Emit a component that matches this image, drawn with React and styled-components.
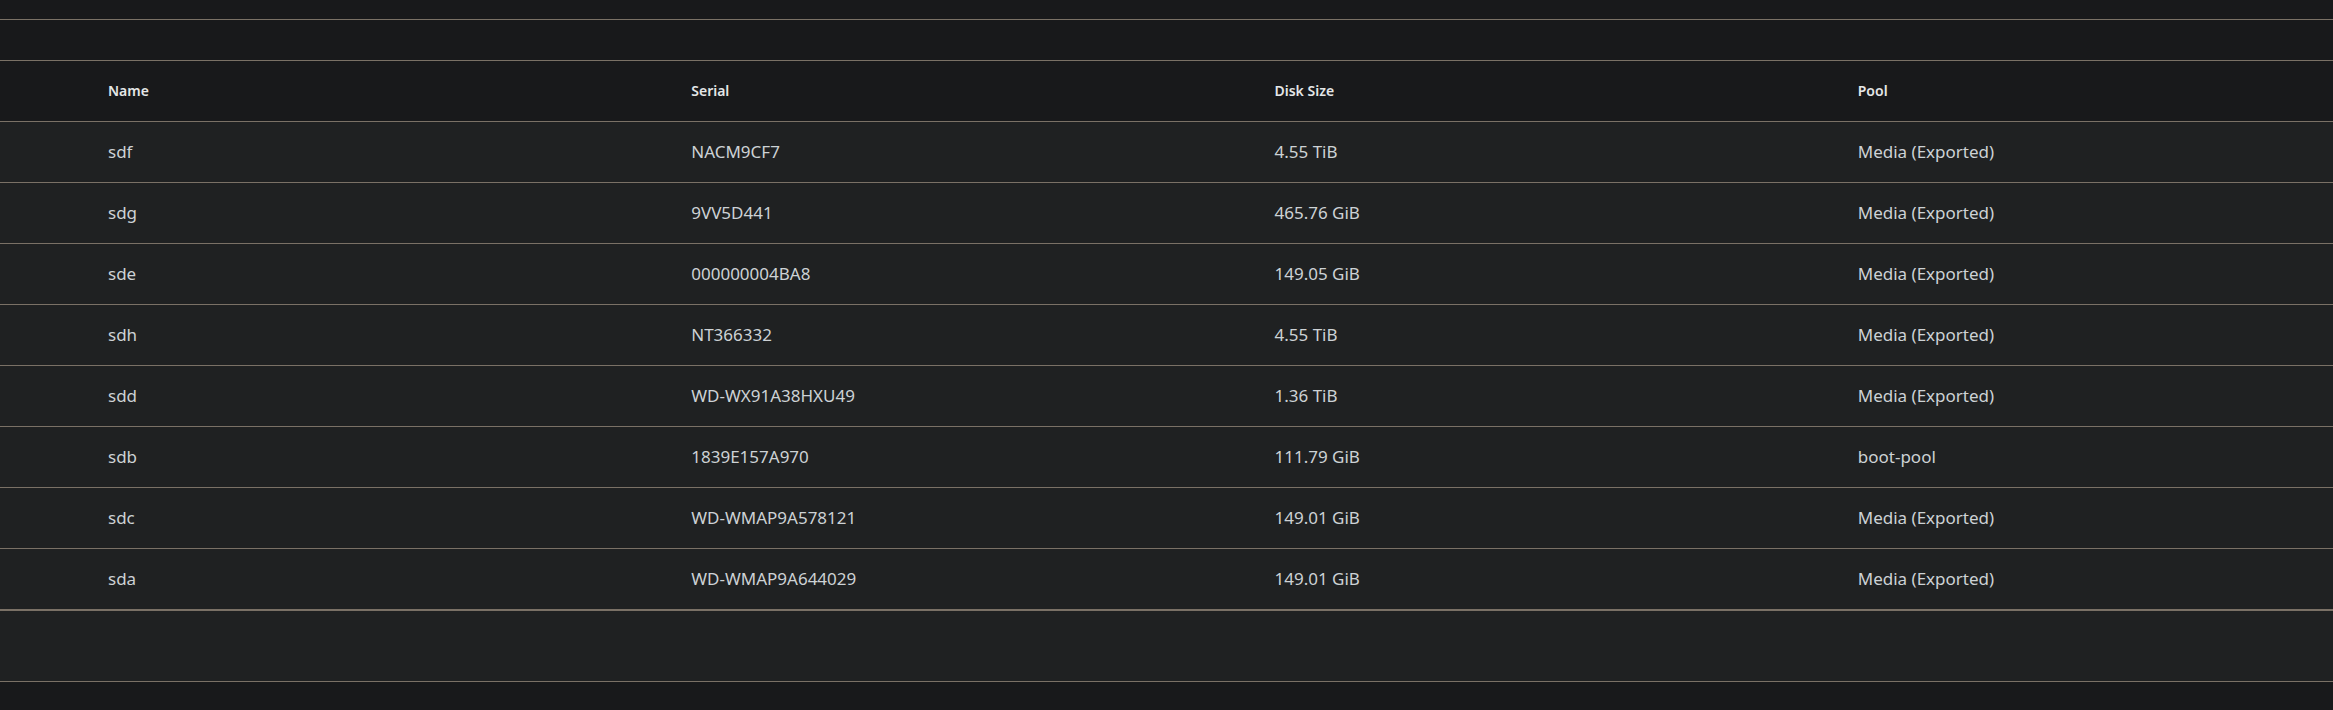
import React from "react";
import styled, { createGlobalStyle } from "styled-components";

const COLORS = {
  bgDark: "#18191b",
  bgRow: "#1f2122",
  line: "#7a7166",
  text: "#cdd2d5",
  head: "#e4e6e7",
};

const GlobalStyle = createGlobalStyle`
  *, *::before, *::after {
    box-sizing: border-box;
  }
  html, body {
    margin: 0;
    padding: 0;
    background: ${COLORS.bgDark};
  }
  body {
    font-family: "Noto Sans", "Open Sans", sans-serif;
    color: ${COLORS.text};
  }
`;

const Page = styled.div`
  width: 100%;
  min-height: 710px;
  background: ${COLORS.bgDark};
`;

const TopStrip = styled.div`
  height: 20px;
  border-bottom: 1px solid ${COLORS.line};
`;

const Toolbar = styled.div`
  height: 41px;
  border-bottom: 1px solid ${COLORS.line};
`;

const Table = styled.div`
  display: flex;
  flex-direction: column;
`;

const Row = styled.div`
  display: grid;
  grid-template-columns: repeat(4, 1fr);
  align-items: center;
  height: 61px;
  background: ${(p) => (p.$head ? "transparent" : COLORS.bgRow)};
  border-bottom: 1px solid ${COLORS.line};
`;

const HeadCell = styled.div`
  padding: 0 0 2px 108px;
  font-size: 14px;
  font-weight: 600;
  color: ${COLORS.head};
`;

const Cell = styled.div`
  padding: 0 0 2px 108px;
  font-size: 17px;
  color: ${COLORS.text};
  white-space: nowrap;
`;

const Footer = styled.div`
  height: 72px;
  background: ${COLORS.bgRow};
  border-top: 1px solid ${COLORS.line};
  border-bottom: 1px solid ${COLORS.line};
`;

const disks = [
  { name: "sdf", serial: "NACM9CF7", size: "4.55 TiB", pool: "Media (Exported)" },
  { name: "sdg", serial: "9VV5D441", size: "465.76 GiB", pool: "Media (Exported)" },
  { name: "sde", serial: "000000004BA8", size: "149.05 GiB", pool: "Media (Exported)" },
  { name: "sdh", serial: "NT366332", size: "4.55 TiB", pool: "Media (Exported)" },
  { name: "sdd", serial: "WD-WX91A38HXU49", size: "1.36 TiB", pool: "Media (Exported)" },
  { name: "sdb", serial: "1839E157A970", size: "111.79 GiB", pool: "boot-pool" },
  { name: "sdc", serial: "WD-WMAP9A578121", size: "149.01 GiB", pool: "Media (Exported)" },
  { name: "sda", serial: "WD-WMAP9A644029", size: "149.01 GiB", pool: "Media (Exported)" },
];

const App = () => {
  return (
    <Page>
      <GlobalStyle />
      <TopStrip />
      <Toolbar />
      <Table>
        <Row $head>
          <HeadCell>Name</HeadCell>
          <HeadCell>Serial</HeadCell>
          <HeadCell>Disk Size</HeadCell>
          <HeadCell>Pool</HeadCell>
        </Row>
        {disks.map((d) => (
          <Row key={d.name}>
            <Cell>{d.name}</Cell>
            <Cell>{d.serial}</Cell>
            <Cell>{d.size}</Cell>
            <Cell>{d.pool}</Cell>
          </Row>
        ))}
      </Table>
      <Footer />
    </Page>
  );
};

export default App;
